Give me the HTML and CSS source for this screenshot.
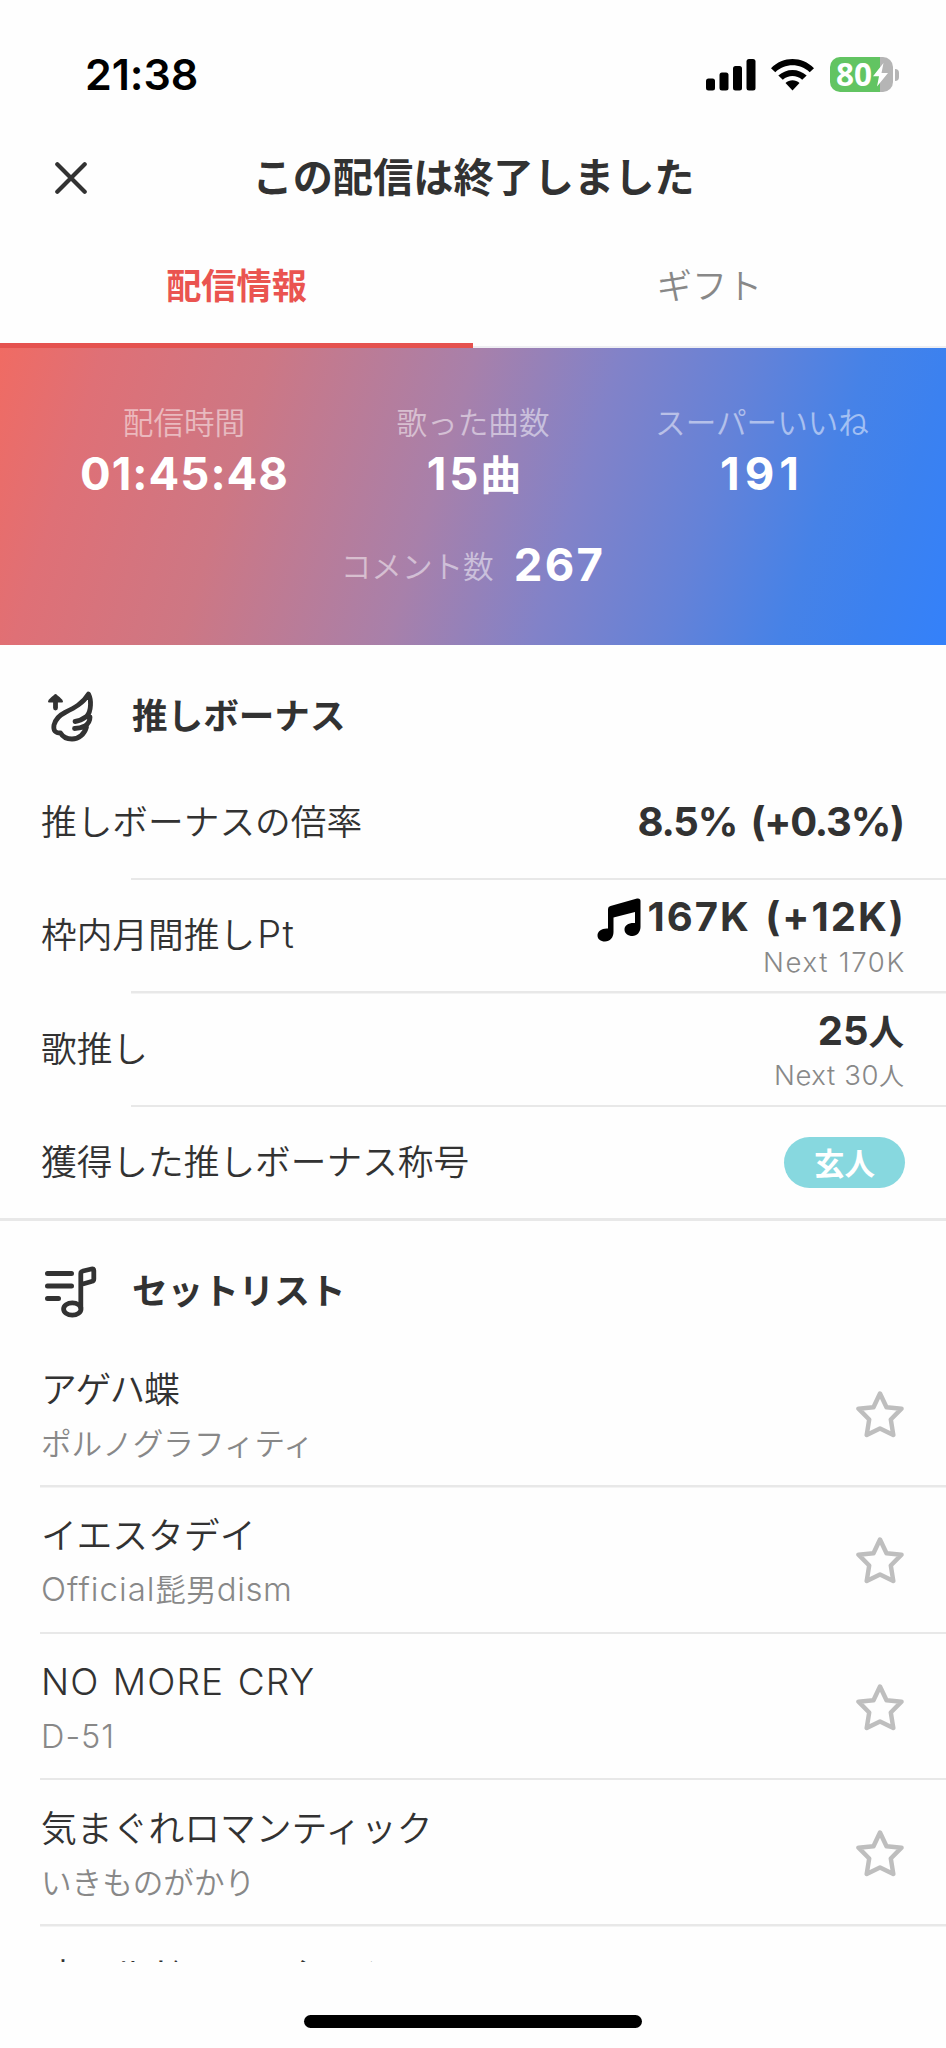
FILE: index.html
```
<!DOCTYPE html>
<html lang="ja">
<head>
<meta charset="utf-8">
<title>この配信は終了しました</title>
<link rel="stylesheet" href="styles.css">
</head>
<body>
<div class="screen">
  <div class="statusbar">
    <span class="clock">21:38</span>
    <div class="indicators">
      <svg class="signal" width="50" height="32" viewBox="0 0 50 32"><rect x="0" y="19.500" width="9" height="12" rx="2.500"/><rect x="13.500" y="13.500" width="9" height="18" rx="2.500"/><rect x="27" y="7" width="9" height="24.500" rx="2.500"/><rect x="40.500" y="0" width="9" height="31.500" rx="2.500"/></svg>
      <svg class="wifi" width="43" height="32" viewBox="0 0 43 32"><path d="M0 9.200C12-3 31-3 43 9.200L38.700 13.300C29 4 14 4 4.300 13.300Z"/><path d="M7.300 16.500C15.500 9 27.500 9 35.700 16.500L31.200 20.800C25.500 15.800 17.500 15.800 11.800 20.800Z"/><path d="M14.500 24C18.500 20.300 24.500 20.300 28.500 24L21.500 31.500Z"/></svg>
      <div class="battery">
        <div class="battery-body"><span class="battery-level">80</span><svg class="bolt" width="15" height="24" viewBox="0 0 15 24"><path d="M10.500 0L0 13.200H6L4 23.500L15 10H8.500Z"/></svg></div>
        <div class="battery-cap"></div>
      </div>
    </div>
  </div>

  <header class="header">
    <svg class="close" width="32" height="32" viewBox="0 0 32 32"><path d="M2.300 2.300L29.700 29.700M29.700 2.300L2.300 29.700"/></svg>
    <h1 class="title">この配信は終了しました</h1>
  </header>

  <nav class="tabs">
    <div class="tab tab-active">配信情報</div>
    <div class="tab">ギフト</div>
  </nav>

  <section class="stats">
    <div class="stats-row">
      <div class="stat"><span class="stat-label">配信時間</span><span class="stat-value time">01:45:48</span></div>
      <div class="stat"><span class="stat-label">歌った曲数</span><span class="stat-value songs-sung">15<span class="unit">曲</span></span></div>
      <div class="stat"><span class="stat-label">スーパーいいね</span><span class="stat-value likes">191</span></div>
    </div>
    <div class="comments"><span class="stat-label">コメント数</span><span class="stat-value comment-count">267</span></div>
  </section>

  <section class="bonus">
    <div class="section-head">
      <svg class="head-icon" width="60" height="60" viewBox="0 0 60 60"><path class="line" d="M15.500 23V14"/><path d="M15.500 9Q16.500 9 22 14.500Q24 17 22 17.500H9Q7 17 9 14.500Q14.500 9 15.500 9Z"/><path class="line" d="M48.500 9C50 12 50.800 15 50.500 20C50.300 25 49 29 46.500 31.500L50 32C50 37 48 39 45 41L46.500 42C44.500 49 39 54 32 54C26 54 22.500 51.500 20.500 48C15.500 48 13 46 14 40C15.500 34 19 30.500 25 27.500C34 23 43 18.500 48.500 9ZM35 36.500C39 36 43 34 46.500 31.500M34.500 43.500C38 43.500 41 43 45 41"/></svg>
      <h2>推しボーナス</h2>
    </div>
    <div class="bonus-row"><span class="name">推しボーナスの倍率</span><div class="amount rate"><strong>8.5% (+0.3%)</strong></div></div>
    <div class="bonus-row"><span class="name">枠内月間推し<span class="pt">Pt</span></span><div class="amount"><div class="points"><svg class="note" width="44" height="44" viewBox="0 0 44 44"><path d="M11 11Q11 8.500 13.500 8L40 .5Q43.500 0 43.500 3V29C43.500 34 40 38 35.500 38C31 38 27.500 35.500 27.500 31.500C27.500 27 32 24.500 38 25V14L16.500 19.500V34C16.500 39.500 13 43.500 8 43.500C3.500 43.500.5 41 .5 37.500C.5 33 5 30 11 30.500Z"/></svg><strong class="k">167K (+12K)</strong></div><small class="next-pt">Next 170K</small></div></div>
    <div class="bonus-row"><span class="name">歌推し</span><div class="amount"><strong>25<span class="unit-s">人</span></strong><small class="next-people">Next 30<span class="unit-xs">人</span></small></div></div>
    <div class="bonus-row"><span class="name">獲得した推しボーナス称号</span><span class="badge">玄人</span></div>
  </section>

  <section class="setlist">
    <div class="section-head">
      <svg class="head-icon" width="60" height="60" viewBox="0 0 60 60"><path class="line thick" d="M7.500 13.500H31.500M7.500 26H31.500M7.500 38.500H18.500"/><path class="line" d="M40.800 48V13.500Q40.800 11.500 43 11L51.500 9Q53.800 8.500 53.800 10.500V19Q53.800 21 51.500 21.500L41 24.500"/><ellipse class="line" cx="32.300" cy="49" rx="8.700" ry="6.200"/></svg>
      <h2>セットリスト</h2>
    </div>
    <ul class="songs">
      <li class="song"><div><p class="song-title tight">アゲハ蝶</p><p class="artist">ポルノグラフィティ</p></div><svg class="star" width="48" height="48" viewBox="0 0 48 48"><path d="M24 3.500L30.500 17.300L45.500 18.700L34.800 29.500L37.300 45L24 38.500L10.700 45L13.200 29.500L2.500 18.700L17.500 17.300Z"/></svg></li>
      <li class="song"><div><p class="song-title">イエスタデイ</p><p class="artist"><span class="official">Official</span>髭男<span class="dism">dism</span></p></div><svg class="star" width="48" height="48" viewBox="0 0 48 48"><path d="M24 3.500L30.500 17.300L45.500 18.700L34.800 29.500L37.300 45L24 38.500L10.700 45L13.200 29.500L2.500 18.700L17.500 17.300Z"/></svg></li>
      <li class="song"><div><p class="song-title latin-title"><span class="latin">NO MORE CRY</span></p><p class="artist"><span class="d51">D-51</span></p></div><svg class="star" width="48" height="48" viewBox="0 0 48 48"><path d="M24 3.500L30.500 17.300L45.500 18.700L34.800 29.500L37.300 45L24 38.500L10.700 45L13.200 29.500L2.500 18.700L17.500 17.300Z"/></svg></li>
      <li class="song"><div><p class="song-title">気まぐれロマンティック</p><p class="artist">いきものがかり</p></div><svg class="star" width="48" height="48" viewBox="0 0 48 48"><path d="M24 3.500L30.500 17.300L45.500 18.700L34.800 29.500L37.300 45L24 38.500L10.700 45L13.200 29.500L2.500 18.700L17.500 17.300Z"/></svg></li>
      <li class="song"><div><p class="song-title">オールドファッション</p></div></li>
    </ul>
  </section>

  <footer class="home"><div class="home-bar"></div></footer>
</div>
</body>
</html>
```

FILE: styles.css
```
* { box-sizing: border-box; }
body { margin: 0; background: #fff; }
h1, h2, p, ul { margin: 0; padding: 0; }
.screen {
  width: 946px; height: 2048px; overflow: hidden;
  display: flex; flex-direction: column;
  background: #fefefe; color: #323232;
  font-family: "Noto Sans CJK JP", sans-serif;
}
.statusbar {
  height: 138px; flex: none; padding: 12px 47px 0 85px;
  display: flex; justify-content: space-between; align-items: center;
}
.clock { font: 600 43px/50px Inter, sans-serif; letter-spacing: -0.1px; margin-top: -2px; color: #000; }
.indicators { display: flex; align-items: center; margin-top: -1px; }
.wifi { margin-left: 15px; }
.battery { display: flex; align-items: center; margin-left: 16px; }
.battery-body {
  width: 63px; height: 35px; border-radius: 10px;
  background: linear-gradient(90deg, #62c462 50px, #b5b5b5 50px);
  display: flex; align-items: center; padding-left: 6px;
}
.battery-level { font: 700 31.5px/33px "Noto Sans", sans-serif; margin-top: -2px; color: #fff; }
.bolt { fill: #fff; margin-left: 1px; }
.battery-cap { width: 4px; height: 12px; margin-left: 2px; background: #b5b5b5; border-radius: 0 4px 4px 0; }

.header { height: 96px; flex: none; display: grid; grid-template-columns: 1fr auto 1fr; align-items: center; padding: 0 54px 18px 55px; }
.close { stroke: #323232; stroke-width: 4.2; stroke-linecap: round; margin-top: 2px; }
.title { font-size: 40.2px; line-height: 50px; font-weight: 700; margin-top: -5px; }

.tabs { height: 114px; flex: none; display: flex; }
.tab {
  flex: 1; padding-top: 25px; text-align: center;
  font-size: 35.2px; line-height: 50px; font-weight: 350; color: #888;
  border-bottom: 2px solid #eeeef2;
}
.tab-active { font-weight: 700; color: #ea5450; border-bottom: 5px solid #e5524f; }

.stats {
  height: 297px; flex: none; color: #fff;
  background: linear-gradient(107deg, #f06b63 0%, #df7076 10%, #cd7784 26%, #a880aa 46%, #8282c8 60%, #6482d8 73%, #4682e7 84%, #3b81f0 92%, #3481fa 100%);
}
.stats-row { display: grid; grid-template-columns: 289px 289px 289px; justify-content: center; padding: 51px 0 0; }
.stat { display: flex; flex-direction: column; align-items: center; }
.stat-label { font-size: 30.6px; line-height: 44px; font-weight: 350; opacity: .5; }
.stat-value { font: 700 45.5px/58px Inter, "Noto Sans CJK JP", sans-serif; margin-top: 2px; }
.time { letter-spacing: 1px; margin-right: -1px; }
.songs-sung { letter-spacing: 3px; height: 58px; margin-right: -2px; }
.likes { letter-spacing: 5px; }
.comment-count { letter-spacing: 2.3px; margin-top: 0; }
.unit { font: 700 41px/41px "Noto Sans CJK JP", sans-serif; letter-spacing: 0; margin-left: -1px; }
.comments { display: flex; justify-content: center; align-items: center; gap: 20px; margin-top: 33px; }

.bonus { flex: none; height: 576px; border-bottom: 3px solid #e8e8e8; }
.section-head { display: flex; align-items: center; height: 120.5px; padding: 18px 0 0 40px; }
.bonus .section-head { height: 121.500px; }
.head-icon { fill: #323232; }
.line { fill: none; stroke: #323232; stroke-width: 4.8; stroke-linecap: round; stroke-linejoin: round; }
.thick { stroke-width: 5; }
.section-head h2 { margin: -2px 0 0 32px; font-size: 35.6px; line-height: 50px; font-weight: 700; }
.bonus-row {
  height: 113.5px; padding: 0 41px 0 41px;
  display: flex; justify-content: space-between; align-items: center;
  background: linear-gradient(#e8e8e8, #e8e8e8) 131px 100% / 100% 2.5px no-repeat;
}
.bonus-row:last-child { background: none; }
.name { font-size: 35.7px; line-height: 50px; font-weight: 350; margin-top: -7px; }
.pt { font: 350 38px/37px Inter, sans-serif; letter-spacing: 1.5px; margin-left: 2px; }
.amount { display: flex; flex-direction: column; align-items: flex-end; margin: 1px 1px 0 0; }
.amount strong { font: 700 40px/48px Inter, sans-serif; }
.rate { margin-top: -2px; }
.rate strong { letter-spacing: -1.2px; word-spacing: 5px; }
.amount .k { letter-spacing: 2px; word-spacing: 3px; margin-right: -1.8px; }
.points { display: flex; align-items: center; gap: 7px; }
.note { margin-top: 5px; }
.unit-s { font: 700 35.5px/35px "Noto Sans CJK JP", sans-serif; }
.amount small { font: 350 27.500px/40px Inter, sans-serif; color: #888; }
.amount .next-pt { letter-spacing: 1.7px; margin-right: -2px; }
.amount .next-people { letter-spacing: .6px; }
.unit-xs { font: 350 25px/25px "Noto Sans CJK JP", sans-serif; letter-spacing: 0; }
.badge {
  width: 121px; height: 51px; border-radius: 26px; background: #87d8df; color: #fff; margin-top: -3px;
  text-align: center; font-size: 30.5px; line-height: 50px; font-weight: 700;
}

.setlist { flex: 1; min-height: 0; overflow: hidden; }
.songs { list-style: none; }
.song {
  height: 146.3px; padding: 19.5px 42px 0 41px;
  display: flex; justify-content: space-between;
  background: linear-gradient(#e8e8e8, #e8e8e8) 40px 100% / 100% 2.5px no-repeat;
}
.song:last-child { padding-top: 19.3px; }
.song-title { font-size: 35.8px; line-height: 52px; height: 52px; font-weight: 350; }
.latin-title { line-height: 50px; }
.artist { margin-top: 3px; font-size: 30.6px; line-height: 52px; height: 52px; font-weight: 350; color: #888; }
.tight { letter-spacing: -1.2px; }
.latin, .official, .dism, .d51 { font-family: Inter, sans-serif; font-weight: 350; line-height: 1; }
.latin { font-size: 37px; letter-spacing: 1.1px; word-spacing: 2px; }
.official { font-size: 33px; letter-spacing: 1px; }
.dism { font-size: 33px; letter-spacing: .6px; }
.d51 { font-size: 32.5px; letter-spacing: 1px; }
.star { margin-top: 29px; fill: none; stroke: #bebebe; stroke-width: 4.5; stroke-linejoin: round; }
.home { height: 86px; flex: none; display: flex; justify-content: center; align-items: flex-end; padding-bottom: 20px; }
.home-bar { width: 338px; height: 13px; border-radius: 7px; background: #000; }
```
